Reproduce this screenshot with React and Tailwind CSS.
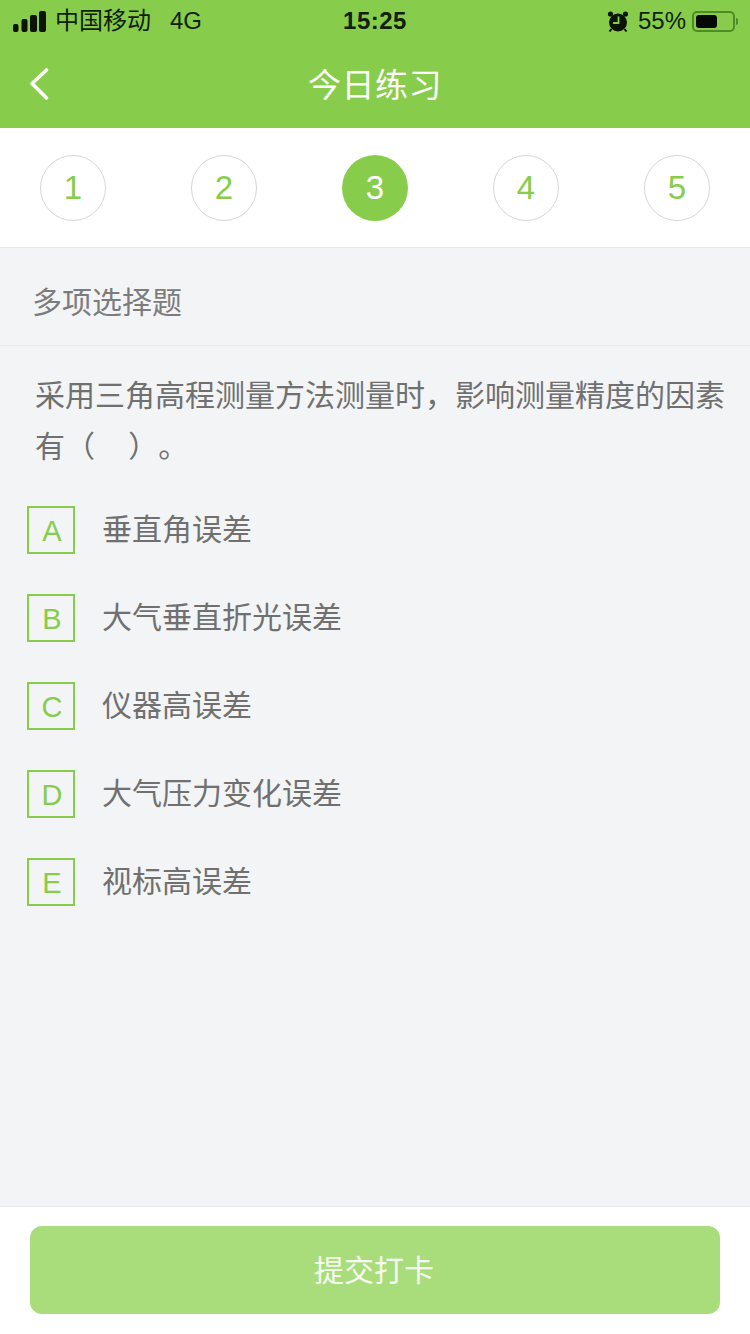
import React from 'react';

const font = "font-['Liberation_Sans','Noto_Sans_CJK_SC',sans-serif]";

const steps = [1, 2, 3, 4, 5];
const options = [
  { key: 'A', text: '垂直角误差' },
  { key: 'B', text: '大气垂直折光误差' },
  { key: 'C', text: '仪器高误差' },
  { key: 'D', text: '大气压力变化误差' },
  { key: 'E', text: '视标高误差' },
];

const StatusBar = () => (
  <div className="relative flex h-[40px] items-center justify-between pl-[13px] pr-[12px] pt-[2px] text-[24px] text-[#10200a]">
    <div className="flex items-center">
      <svg width="33" height="21" viewBox="0 0 33 21" fill="#0c1408">
        <rect x="0" y="13" width="5.5" height="8" rx="2" />
        <rect x="8.5" y="8" width="6" height="13" rx="2" />
        <rect x="17" y="4" width="7" height="17" rx="2" />
        <rect x="26" y="0" width="7" height="21" rx="2" />
      </svg>
      <span className="ml-[9px] text-[24px] leading-none">中国移动</span>
      <span className="ml-[19px] text-[24px] leading-none">4G</span>
    </div>
    <span className="absolute left-0 right-0 text-center text-[24px] font-bold leading-none tracking-[0.5px]">15:25</span>
    <div className="flex items-center">
      <svg width="22" height="22" viewBox="0 0 22 22" fill="#0c1408">
        <circle cx="11" cy="12.5" r="9" />
        <circle cx="3.5" cy="4" r="2.6" />
        <circle cx="18.5" cy="4" r="2.6" />
        <path d="M4.5 19l-2 2.5M17.5 19l2 2.5" stroke="#0c1408" strokeWidth="2" />
        <path d="M11.5 6.5v6.5H6" fill="none" stroke="#87cd4b" strokeWidth="1.8" />
      </svg>
      <span className="ml-[9px] text-[24px] leading-none">55%</span>
      <div className="ml-[6px] flex h-[21px] w-[43px] items-center rounded-[5px] border-2 border-[#4f8a26] p-[2px]">
        <div className="h-full w-[21px] rounded-[3px] bg-[#050805]" />
      </div>
      <div className="ml-[1px] h-[7px] w-[2px] rounded-r bg-[#4f8a26]" />
    </div>
  </div>
);

const App = () => {
  return (
    <div className={`${font} flex h-[1334px] w-[750px] flex-col bg-[#f2f4f6]`}>
      <header className="h-[128px] bg-[#87cd4b]">
        <StatusBar />
        <div className="relative flex h-[88px] items-center justify-center pt-[2px]">
          <svg className="absolute left-[28px] top-[27px]" width="22" height="34" viewBox="0 0 22 34" fill="none" stroke="#fff" strokeWidth="3.6" strokeLinecap="round" strokeLinejoin="round">
            <path d="M18.5 3L4 16.5 18.5 31" />
          </svg>
          <span className="text-[33px] leading-none tracking-[0.5px] text-white">今日练习</span>
        </div>
      </header>

      <div className="flex h-[120px] items-center justify-between border-b border-[#e8eaec] bg-white px-[40px] pt-px">
        {steps.map(n => (
          <div
            key={n}
            className={n === 3
              ? 'flex h-[66px] w-[66px] items-center justify-center rounded-full bg-[#87cd4b] text-[33px] text-white'
              : 'flex h-[66px] w-[66px] items-center justify-center rounded-full border border-[#d4d6d8] text-[33px] text-[#87cd4b]'}
          >
            {n}
          </div>
        ))}
      </div>

      <div className="flex h-[98px] items-center border-b border-[#e8eaec] pl-[32px] pt-[12px] text-[30px] text-[#7c7c7c]">
        多项选择题
      </div>

      <p className="ml-[35px] mt-[24px] w-[700px] text-[30px] leading-[51px] text-[#707070] [text-spacing-trim:space-all]">
        采用三角高程测量方法测量时，影响测量精度的因素有（&nbsp;&nbsp;&nbsp;&nbsp;）。
      </p>

      <div className="ml-[27px] mt-[34px] flex flex-col gap-[40px]">
        {options.map(o => (
          <div key={o.key} className="flex h-[48px] items-center">
            <div className="flex h-[48px] w-[48px] items-center justify-center border-2 border-[#87cd4b] pl-[2px] pt-[4px] text-[29px] text-[#87cd4b]">
              {o.key}
            </div>
            <span className="ml-[27px] text-[30px] leading-none text-[#707070]">{o.text}</span>
          </div>
        ))}
      </div>

      <div className="mt-auto flex h-[128px] border-t border-[#e8eaec] bg-white px-[30px] pt-[19px]">
        <button className="flex h-[88px] w-full items-center justify-center rounded-[12px] bg-[#a9dc7a] pr-[2px] text-[30px] text-white/90">
          提交打卡
        </button>
      </div>
    </div>
  );
};

export default App;
